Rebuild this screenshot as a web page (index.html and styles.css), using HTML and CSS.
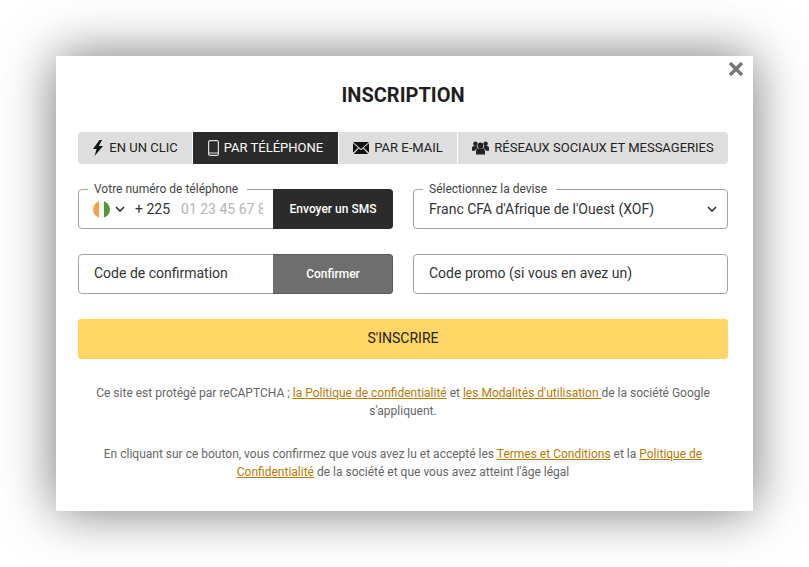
FILE: index.html
```html
<!DOCTYPE html>
<html lang="fr">
<head>
    <meta charset="UTF-8">
    <meta name="viewport" content="width=device-width, initial-scale=1.0">
    <title>Inscription</title>
    <link rel="stylesheet" href="styles.css">
</head>
<body>

    <div class="modal">
        <button class="close" aria-label="Fermer">
            <svg width="16" height="16" viewBox="0 0 16 16"><path d="M2 2l12 12M14 2L2 14" stroke="#777" stroke-width="3.4" fill="none"/></svg>
        </button>

        <h1 class="title">INSCRIPTION</h1>

        <div class="tabs">
            <div class="tab tab-click">
                <svg width="12" height="16" viewBox="0 0 12 16"><path d="M7.5 0L1 9h3.6L2.6 16 11 6H6.8L10 0z" fill="#111"/></svg>
                EN UN CLIC
            </div>
            <div class="tab tab-phone active">
                <svg width="11" height="16" viewBox="0 0 11 16"><rect x="0.6" y="0.6" width="9.8" height="14.8" rx="1.5" fill="none" stroke="#ddd" stroke-width="1.2"/><path d="M1 13h9" stroke="#ddd"/></svg>
                PAR TÉLÉPHONE
            </div>
            <div class="tab tab-mail">
                <svg width="16" height="12" viewBox="0 0 16 12"><path d="M0 0h16L8 7z M0 1.200v9.600L5.200 5.700z M16 1.200v9.600L10.800 5.700z M0.800 12h14.400L10.100 6.400 8 8.200 5.900 6.400z" fill="#111"/></svg>
                PAR E-MAIL
            </div>
            <div class="tab tab-social">
                <svg width="17" height="14" viewBox="0 0 17 14"><g fill="#222"><circle cx="8.500" cy="4.400" r="2.900"/><path d="M4 13.500v-3c0-2 1.300-3.200 2.600-3.200h3.800c1.300 0 2.600 1.200 2.600 3.200v3z"/><circle cx="3.400" cy="2.800" r="2.200"/><path d="M0 9.800V7.200c0-1.300.9-2.100 2-2.100h2.700c.2 1 .6 1.600 1.200 2.100-1.700.5-2.600 1.500-2.800 2.600z"/><circle cx="13.600" cy="2.800" r="2.200"/><path d="M17 9.800V7.200c0-1.300-.9-2.100-2-2.100h-2.700c-.2 1-.6 1.600-1.200 2.100 1.700.5 2.600 1.500 2.800 2.600z"/></g></svg>
                RÉSEAUX SOCIAUX ET MESSAGERIES
            </div>
        </div>

        <div class="form-row first">
            <div class="field">
                <span class="legend">Votre numéro de téléphone</span>
                <div class="phone-prefix">
                    <svg class="flag" width="17" height="17" viewBox="0 0 17 17"><defs><clipPath id="flagClip"><circle cx="8.500" cy="8.500" r="8.500"/></clipPath></defs><g clip-path="url(#flagClip)"><rect width="6" height="17" fill="#f4a24a"/><rect x="6" width="5" height="17" fill="#f7f7f2"/><rect x="11" width="6" height="17" fill="#4f9a38"/></g></svg>
                    <svg class="chevron" width="10" height="6" viewBox="0 0 10 6"><path d="M1 1l4 4 4-4" fill="none" stroke="#222" stroke-width="1.500"/></svg>
                    <span class="dial">+ 225</span>
                </div>
                <span class="phone-hint">01 23 45 67 89</span>
                <button class="side-btn dark">Envoyer un SMS</button>
            </div>
            <div class="field select">
                <span class="legend">Sélectionnez la devise</span>
                <span class="value">Franc CFA d'Afrique de l'Ouest (XOF)</span>
                <svg class="chevron" width="10" height="6" viewBox="0 0 10 6"><path d="M1 1l4 4 4-4" fill="none" stroke="#222" stroke-width="1.500"/></svg>
            </div>
        </div>

        <div class="form-row">
            <div class="field">
                <span class="value lifted grow">Code de confirmation</span>
                <button class="side-btn grey">Confirmer</button>
            </div>
            <div class="field">
                <span class="value lifted">Code promo (si vous en avez un)</span>
            </div>
        </div>

        <button class="submit">S'INSCRIRE</button>

        <p class="note recaptcha">Ce site est protégé par reCAPTCHA ; <a href="#">la Politique de confidentialité</a> et <a href="#">les Modalités d'utilisation </a> de la société Google s'appliquent.</p>

        <p class="note terms">En cliquant sur ce bouton, vous confirmez que vous avez lu et accepté les <a href="#">Termes et Conditions</a> et la <a href="#">Politique de Confidentialité</a> de la société et que vous avez atteint l'âge légal</p>
    </div>

</body>
</html>
```

FILE: styles.css
```css
* {
    box-sizing: border-box;
}
body {
    margin: 0;
    height: 567px;
    overflow: hidden;
    background: #fff;
    font-family: Roboto, Arial, sans-serif;
    color: #222;
}

.modal {
    position: relative;
    width: 697px;
    height: 455px;
    margin: 56px 0 0 56px;
    padding: 28px 25px 0 22px;
    background: #fff;
    box-shadow: 0 0 50px rgba(0, 0, 0, 0.55);
}
.close {
    position: absolute;
    top: 5px;
    right: 9px;
    padding: 0;
    border: none;
    background: none;
    line-height: 0;
}
.title {
    margin: 0;
    height: 22px;
    font-size: 20px;
    line-height: 22px;
    font-weight: 700;
    text-align: center;
    color: #1f1f1f;
}

/* Onglets */
.tabs {
    display: flex;
    gap: 1px;
    height: 32px;
    margin-top: 26px;
    border-radius: 4px;
    overflow: hidden;
}
.tab {
    display: flex;
    align-items: center;
    justify-content: center;
    gap: 5px;
    padding-bottom: 1px;
    background: #dedede;
    font-size: 13px;
    color: #222;
}
.tab-click {
    width: 114px;
}
.tab-phone {
    width: 145px;
}
.tab-mail {
    width: 118px;
}
.tab-social {
    flex: 1;
}
.tab.active {
    background: #2b2b2b;
    color: #fff;
}

/* Champs */
.form-row {
    display: flex;
    gap: 20px;
    margin-top: 25px;
}
.field {
    position: relative;
    display: flex;
    align-items: center;
    width: 315px;
    height: 40px;
    padding-left: 15px;
    border: 1px solid #a3a3a3;
    border-radius: 4px;
    font-size: 14px;
    color: #333;
}
.legend {
    position: absolute;
    top: -8px;
    left: 9px;
    padding: 0 9px 0 6px;
    background: #fff;
    font-size: 12px;
    line-height: 14px;
    color: #444;
}
.lifted {
    margin-bottom: 2px;
}
.grow {
    flex: 1;
}
.select {
    justify-content: space-between;
    padding-right: 10px;
}
.phone-prefix {
    display: flex;
    align-items: center;
    flex: none;
}
.flag {
    margin-right: 5px;
    margin-left: -1px;
}
.dial {
    margin-left: 10px;
    color: #333;
}
.phone-hint {
    flex: 1;
    min-width: 0;
    margin: 0 10px 0 11px;
    overflow: hidden;
    white-space: nowrap;
    color: #b5b5b5;
}
.side-btn {
    flex: none;
    width: 120px;
    height: 40px;
    margin: -1px -1px -1px 0;
    padding: 0;
    border: none;
    border-radius: 0 4px 4px 0;
    font-family: inherit;
    font-size: 12px;
    font-weight: 500;
    color: #fff;
}
.dark {
    background: #2b2b2b;
}
.grey {
    padding-left: 1px;
    border: 1px solid #5a5a5a;
    border-left: none;
    background: #6e6e6e;
}

.submit {
    display: block;
    width: 650px;
    height: 40px;
    margin-top: 25px;
    padding-bottom: 3px;
    border: none;
    border-radius: 3px;
    background: #ffd566;
    font-family: inherit;
    font-size: 14px;
    color: #222;
}

/* Textos legais */
.note {
    margin: 0;
    padding: 0 15px;
    font-size: 12px;
    line-height: 18px;
    text-align: center;
    color: #666;
}
.note a {
    color: #b87a00;
}
.recaptcha {
    margin-top: 25px;
}
.terms {
    margin-top: 25px;
}
```
